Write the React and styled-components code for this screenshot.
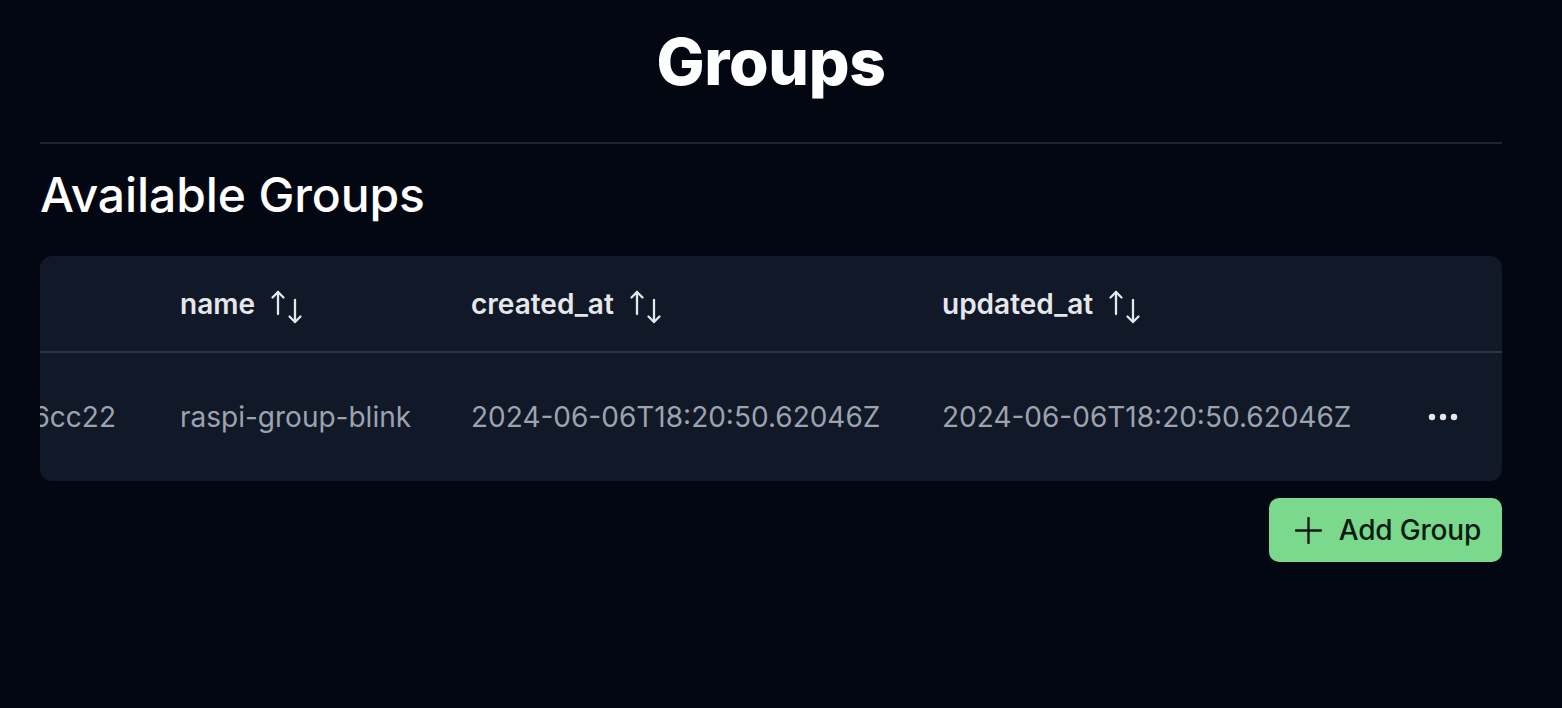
import React from "react";
import styled, { createGlobalStyle } from "styled-components";

const Global = createGlobalStyle`
  html, body { margin: 0; padding: 0; background: #030712; }
  body { font-family: Inter, "Noto Sans", sans-serif; color: #f9fafb; }
  * { box-sizing: border-box; }
`;

const Page = styled.div`
  min-height: 708px;
  padding: 27px 60px 40px 40px;
  background: #030712;
`;

const Title = styled.h1`
  margin: 0;
  text-align: center;
  font-size: 64px;
  line-height: 70px;
  font-weight: 800;
  color: #ffffff;
  letter-spacing: -0.3px;
`;

const Divider = styled.hr`
  margin: 45px 0 0;
  border: 0;
  height: 2px;
  background: #1f2430;
`;

const Subtitle = styled.h2`
  margin: 23px 0 0;
  font-size: 48px;
  line-height: 56px;
  font-weight: 500;
  color: #ffffff;
  letter-spacing: -0.1px;
`;

const Card = styled.div`
  margin-top: 33px;
  background: #111827;
  border-radius: 12px;
  overflow: hidden;
`;

const Row = styled.div`
  display: grid;
  grid-template-columns: 140px 291px 471px 442px 118px;
  align-items: center;
  height: ${(p) => p.$h}px;
  border-bottom: ${(p) => (p.$border ? "2px solid #2f3544" : "none")};
`;

const HeadCell = styled.div`
  display: flex;
  align-items: center;
  gap: 15px;
  font-size: 28px;
  font-weight: 600;
  color: #e5e7eb;
  white-space: nowrap;
`;

const Cell = styled.div`
  font-size: 28px;
  font-weight: 400;
  color: #9ca3af;
  white-space: nowrap;
`;

const IdCell = styled(Cell)`
  overflow: hidden;
  display: flex;
  justify-content: flex-end;
  padding-right: 64px;
`;

const ActionCell = styled.div`
  display: flex;
  justify-content: center;
  align-items: center;
`;

const Footer = styled.div`
  display: flex;
  justify-content: flex-end;
  margin-top: 17px;
`;

const AddButton = styled.button`
  display: flex;
  align-items: center;
  gap: 17px;
  height: 64px;
  padding: 0 21px 0 26px;
  border: 0;
  border-radius: 10px;
  background: #7ad98c;
  color: #0b1a12;
  font-family: Inter, "Noto Sans", sans-serif;
  font-size: 28px;
  font-weight: 500;
  letter-spacing: -0.2px;
  cursor: pointer;
`;

const SortIcon = () => (
  <svg width="34" height="34" viewBox="0 0 34 34" fill="none" stroke="#e5e7eb" strokeWidth="2.3" strokeLinecap="round" strokeLinejoin="round" style={{ marginTop: 6 }}>
    <path d="M8 2v22" />
    <path d="M2.5 7.5 8 2l5.5 5.5" />
    <path d="M25 10v22" />
    <path d="M19.5 26.5 25 32l5.5-5.5" />
  </svg>
);

const Dots = () => (
  <svg width="30" height="8" viewBox="0 0 30 8" fill="#e5e7eb">
    <circle cx="4" cy="4" r="3.2" />
    <circle cx="15" cy="4" r="3.2" />
    <circle cx="26" cy="4" r="3.2" />
  </svg>
);

const Plus = () => (
  <svg width="27" height="27" viewBox="0 0 27 27" fill="none" stroke="#0b1a12" strokeWidth="2.4" strokeLinecap="round">
    <path d="M1 13.5h25" />
    <path d="M13.5 1v25" />
  </svg>
);

const columns = ["name", "created_at", "updated_at"];

export default function App() {
  return (
    <>
      <Global />
      <Page>
        <Title>Groups</Title>
        <Divider />
        <Subtitle>Available Groups</Subtitle>
        <Card>
          <Row $h={97} $border>
            <div />
            {columns.map((c) => (
              <HeadCell key={c}>
                {c}
                <SortIcon />
              </HeadCell>
            ))}
            <div />
          </Row>
          <Row $h={128}>
            <IdCell>e1a29b46cc22</IdCell>
            <Cell>raspi-group-blink</Cell>
            <Cell>2024-06-06T18:20:50.62046Z</Cell>
            <Cell>2024-06-06T18:20:50.62046Z</Cell>
            <ActionCell>
              <Dots />
            </ActionCell>
          </Row>
        </Card>
        <Footer>
          <AddButton>
            <Plus />
            Add Group
          </AddButton>
        </Footer>
      </Page>
    </>
  );
}
